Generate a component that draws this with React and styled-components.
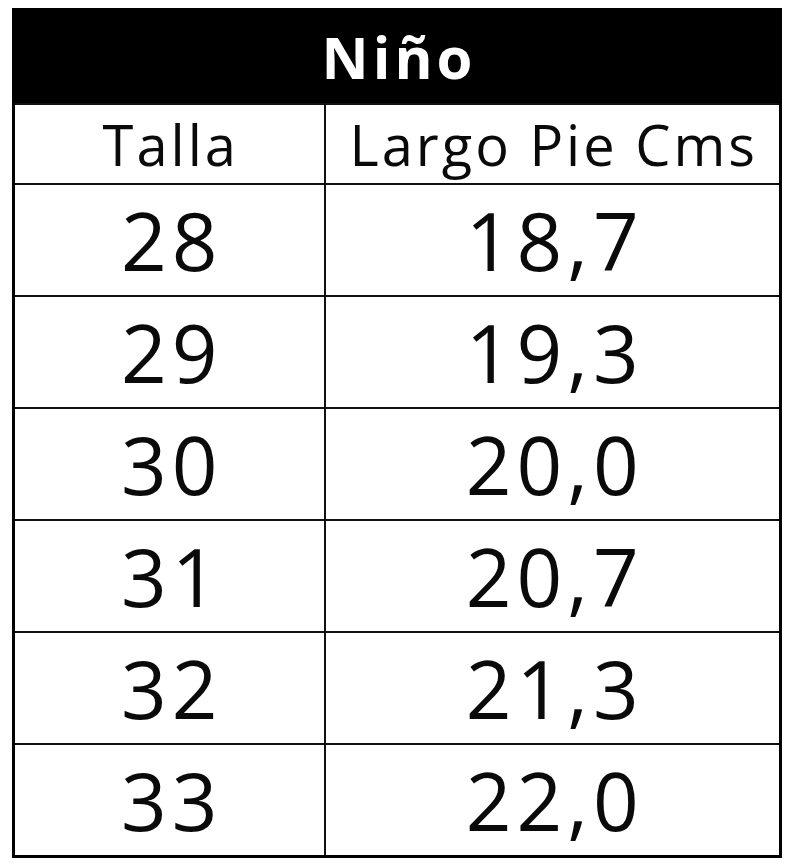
import React from "react";
import styled, { createGlobalStyle } from "styled-components";

const rows = [
  ["28", "18,7"],
  ["29", "19,3"],
  ["30", "20,0"],
  ["31", "20,7"],
  ["32", "21,3"],
  ["33", "22,0"],
];

const GlobalStyle = createGlobalStyle`
  body {
    margin: 0;
    background: #fff;
    font-family: "Open Sans", "DejaVu Sans", sans-serif;
  }
`;

const Page = styled.div`
  padding: 8px 18px 0 12px;
`;

const Table = styled.table`
  width: 770px;
  border-collapse: collapse;
  border: 3px solid #000;
  table-layout: fixed;
`;

const TitleCell = styled.th`
  height: 92px;
  background: #000;
  color: #fff;
  font-size: 58px;
  font-weight: bold;
  letter-spacing: 4px;
  text-align: center;
  padding: 0 0 0 4px;
  line-height: 1;
`;

const Cell = styled.td`
  border: 2px solid #111;
  text-align: center;
  padding: 0 0 0 ${(p) => (p.$head ? "3px" : "5px")};
  color: #0a0a0a;
  font-size: ${(p) => (p.$head ? "56px" : "80px")};
  letter-spacing: ${(p) => (p.$head ? "3px" : "5px")};
  height: ${(p) => (p.$head ? "78px" : "110px")};
  line-height: 1;
`;

const App = () => {
  return (
    <>
      <GlobalStyle />
      <Page>
        <Table>
          <colgroup>
            <col style={{ width: "311px" }} />
            <col />
          </colgroup>
          <thead>
            <tr>
              <TitleCell colSpan={2}>Niño</TitleCell>
            </tr>
          </thead>
          <tbody>
            <tr>
              <Cell $head>Talla</Cell>
              <Cell $head>Largo Pie Cms</Cell>
            </tr>
            {rows.map(([size, length]) => (
              <tr key={size}>
                <Cell>{size}</Cell>
                <Cell>{length}</Cell>
              </tr>
            ))}
          </tbody>
        </Table>
      </Page>
    </>
  );
};

export default App;
